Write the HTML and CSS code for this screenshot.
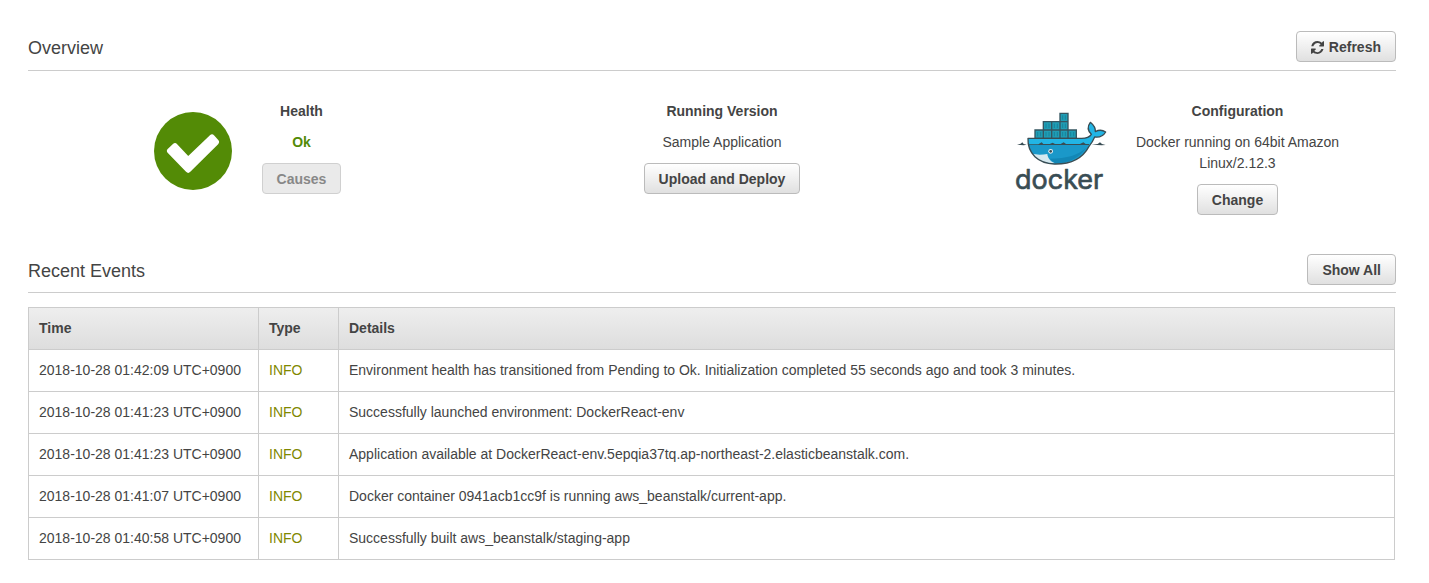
FILE: index.html
```html
<!DOCTYPE html>
<html lang="en">
<head>
<meta charset="utf-8">
<title>Environment overview</title>
<link rel="stylesheet" href="styles.css">
</head>
<body>
<main class="page">
  <section class="overview">
    <header class="section-head">
      <h2>Overview</h2>
      <button class="btn btn-icon" type="button">
        <svg class="refresh-icon" viewBox="0 0 1536 1536" aria-hidden="true"><path d="M1474 928q0 5-1 7-64 268-258 434.500T764 1536q-146 0-272.500-55T258 1344l-149 149q-19 19-45 19t-45-19-19-45V960q0-26 19-45t45-19h448q26 0 45 19t19 45-19 45l-157 137q71 96 151 132t217 46q134 0 230-65t166-179q11-17 53-117 8-23 30-23h192q13 0 22.500 9.500t9.500 22.500zm62-800v448q0 26-19 45t-45 19h-448q-26 0-45-19t-19-45 19-45l158-148Q979 236 768 236q-134 0-230 65T352 480q-11 17-53 117-8 23-30 23H70q-13 0-22.500-9.500T38 588v-7q65-258 260-419.500T768 0q146 0 274 50.500T1277 192l150-149q19-19 45-19t45 19 19 45z"/></svg>
        Refresh
      </button>
    </header>
    <div class="cards">
      <div class="card">
        <svg class="health-icon" viewBox="0 0 78 78" role="img" aria-label="Healthy"><circle cx="39" cy="39" r="39"/><path d="M16 39 21 34.300 34.200 48.200 58 25.500 62 30 34.200 57.700Z"/></svg>
        <div class="card-body">
          <h3>Health</h3>
          <p class="ok">Ok</p>
          <button class="btn" type="button" disabled>Causes</button>
        </div>
      </div>
      <div class="card">
        <div class="card-body">
          <h3>Running Version</h3>
          <p>Sample Application</p>
          <button class="btn" type="button">Upload and Deploy</button>
        </div>
      </div>
      <div class="card docker-card">
        <svg class="docker-logo" viewBox="36 36 288 240" role="img" aria-label="docker">
          <g class="boxes">
            <path d="M177 40h24v25h-24zM127 65h25v25h-25zM152 65h25v25h-25zM177 65h24v25h-24zM102 90h25v25h-25zM127 90h25v25h-25zM152 90h25v25h-25zM177 90h24v25h-24zM201 90h25v25h-25z"/>
          </g>
          <path class="ribs" d="M185 46v13M193 46v13M135 71v13M144 71v13M160 71v13M169 71v13M185 71v13M193 71v13M110 96v13M119 96v13M135 96v13M144 96v13M160 96v13M169 96v13M185 96v13M193 96v13M209 96v13M218 96v13"/>
          <path class="whale" d="M81 115H242C256 115 266 111 271 103C260 92 259 79 268 67C279 76 284 83 283 95C294 89 305 90 314 96C307 108 295 113 281 111C276 123 270 132 264 139C246 173 211 193 160 192C112 190 79 161 81 115Z"/>
          <path class="deep" d="M83 135H265C244 173 211 191 160 190C116 188 88 167 83 135Z"/>
          <path class="shade" d="M162 190C207 190 236 171 256 143C232 165 200 175 146 176Z"/>
          <path class="belly" d="M91 160C109 166 124 164 139 162C140 175 149 184 162 190C126 191 103 177 91 160Z"/>
          <path class="outline" d="M81 115H242C256 115 266 111 271 103C260 92 259 79 268 67C279 76 284 83 283 95C294 89 305 90 314 96C307 108 295 113 281 111C276 123 270 132 264 139C246 173 211 193 160 192C112 190 79 161 81 115Z"/>
          <path class="waves" d="M48 134 59 131 64 127 68 132 77 134 68 136ZM83 133H112L122 127 127 132H146L155 128 162 132H179L188 127 195 132H237L247 127 254 132H264V135H83ZM272 134 290 132 297 127 303 132 314 135 302 136Z"/>
          <circle class="eye" cx="149" cy="154" r="7"/><circle class="pupil" cx="149" cy="154" r="4"/>
          <text class="wordmark" x="42" y="268">docker</text>
        </svg>
        <div class="card-body">
          <h3>Configuration</h3>
          <p>Docker running on 64bit Amazon Linux/2.12.3</p>
          <button class="btn" type="button">Change</button>
        </div>
      </div>
    </div>
  </section>
  <section class="recent">
    <header class="section-head">
      <h2>Recent Events</h2>
      <button class="btn" type="button">Show All</button>
    </header>
    <div class="events-wrap">
      <table class="events">
        <thead>
          <tr><th class="col-time" scope="col">Time</th><th class="col-type" scope="col">Type</th><th scope="col">Details</th></tr>
        </thead>
        <tbody>
          <tr><td>2018-10-28 01:42:09 UTC+0900</td><td class="info">INFO</td><td>Environment health has transitioned from Pending to Ok. Initialization completed 55 seconds ago and took 3 minutes.</td></tr>
          <tr><td>2018-10-28 01:41:23 UTC+0900</td><td class="info">INFO</td><td>Successfully launched environment: DockerReact-env</td></tr>
          <tr><td>2018-10-28 01:41:23 UTC+0900</td><td class="info">INFO</td><td>Application available at DockerReact-env.5epqia37tq.ap-northeast-2.elasticbeanstalk.com.</td></tr>
          <tr><td>2018-10-28 01:41:07 UTC+0900</td><td class="info">INFO</td><td>Docker container 0941acb1cc9f is running aws_beanstalk/current-app.</td></tr>
          <tr><td>2018-10-28 01:40:58 UTC+0900</td><td class="info">INFO</td><td>Successfully built aws_beanstalk/staging-app</td></tr>
        </tbody>
      </table>
    </div>
  </section>
</main>
</body>
</html>
```
FILE: styles.css
```css
* { box-sizing: border-box; }

body {
  margin: 0;
  background: #fff;
  color: #444;
  font: 14px/21px "Liberation Sans", Arial, sans-serif;
}

.page { padding: 31px 33px 23px 28px; }

.section-head {
  display: flex;
  align-items: center;
  justify-content: space-between;
  padding-bottom: 8px;
  border-bottom: 1px solid #ccc;
}
.recent .section-head { padding-bottom: 7px; }

h2, h3, p { margin: 0; }
h2 { padding-top: 2px; font-size: 18px; font-weight: 400; line-height: 24px; }
h3 { font-size: 14px; font-weight: 700; }

.btn {
  display: inline-flex;
  align-items: center;
  height: 31px;
  padding: 2px 14px 0;
  border: 1px solid #bbb;
  border-radius: 4px;
  background: linear-gradient(#fff, #e0e0e0);
  color: #444;
  font: 700 14px/21px "Liberation Sans", Arial, sans-serif;
  white-space: nowrap;
}
.btn:disabled { background: #eaeaea; border-color: #d0d0d0; color: #888; }
.btn-icon { gap: 5px; }

.refresh-icon { width: 13px; height: 13px; fill: #444; }

.cards {
  display: grid;
  grid-template-columns: 439fr 510fr 401fr;
  padding: 30px 18px 39px 0;
}
.card { display: flex; justify-content: center; gap: 30px; }
.docker-card { gap: 24px; }
.docker-card .card-body { width: 210px; }
.card-body {
  display: flex;
  flex-direction: column;
  align-items: center;
  gap: 10px;
  text-align: center;
}
.ok { color: #538b06; font-weight: 700; }

.health-icon { flex: none; width: 78px; height: 78px; margin-top: 11px; }
.health-icon circle { fill: #538b06; }
.health-icon path { fill: #fff; stroke: #fff; stroke-width: 6; stroke-linejoin: round; }

.docker-logo { flex: none; width: 96px; height: 80px; margin-top: 11px; overflow: visible; }
.boxes { fill: #209db5; stroke: #355560; stroke-width: 4; }
.ribs { fill: none; stroke: #17849c; stroke-width: 3; }
.whale { fill: #22b5e5; }
.deep { fill: #1a98c9; }
.shade { fill: #1287b6; }
.belly { fill: #d5e9f0; }
.outline { fill: none; stroke: #394d54; stroke-width: 4; stroke-linejoin: round; }
.waves { fill: #394d54; }
.eye { fill: #e4eef2; }
.pupil { fill: #394d54; }
.wordmark {
  fill: #394d54;
  stroke: #394d54;
  stroke-width: 2;
  stroke-linejoin: round;
  font: 400 81px Inter, sans-serif;
}

.events-wrap { padding: 14px 1px 0 0; }
.events { width: 100%; border-collapse: collapse; table-layout: fixed; }
.events th, .events td {
  height: 42px;
  padding: 0 10px;
  border: 1px solid #ccc;
  text-align: left;
}
.events thead { background: linear-gradient(#eee, #ddd); }
.events .col-time { width: 230px; }
.events .col-type { width: 80px; }
.events .info { color: #7f8800; }
```
